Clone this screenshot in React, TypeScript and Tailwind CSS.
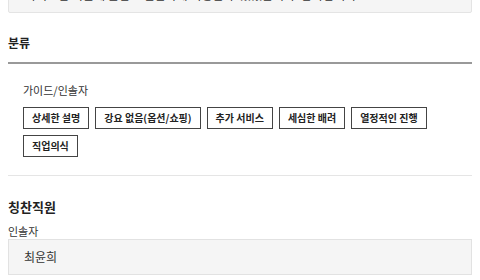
import React from 'react';

const tags = ['상세한 설명', '강요 없음(옵션/쇼핑)', '추가 서비스', '세심한 배려', '열정적인 진행', '직업의식'];

const App = () => {
  return (
    <div
      className="w-[480px] h-[280px] overflow-hidden bg-white px-2 text-[#222]"
      style={{ fontFamily: '"Noto Sans CJK KR", "Noto Sans", sans-serif' }}
    >
      {/* 후기 내용 (위로 잘려 보임) */}
      <div className="-mt-[25px] h-[38px] rounded-[2px] border border-[#e4e4e4] bg-[#f5f5f5] px-[16px] pt-[10px] text-[12px] leading-[18px] text-[#333]">
        가이드님 덕분에 즐겁고 편안하게 여행할 수 있었습니다. 감사합니다.
      </div>

      <div className="mt-[21px] border-b-2 border-[#999] pb-[10px] text-[12px] font-bold leading-[18px] text-[#222]">
        분류
      </div>

      <div className="border-b border-[#e5e5e5] px-[15px] pt-[18px] pb-[18px]">
        <div className="text-[11px] leading-[16px] text-[#333]">가이드/인솔자</div>
        <div className="mt-[9px] flex flex-wrap gap-[6px]">
          {tags.map((tag) => (
            <button
              key={tag}
              type="button"
              className="h-[22px] border border-[#444] bg-white px-[8px] text-[10px] font-bold leading-[20px] text-[#222]"
            >
              {tag}
            </button>
          ))}
        </div>
      </div>

      <div className="mt-[21px] text-[13px] font-bold leading-[20px] text-[#222]">칭찬직원</div>
      <div className="mt-[7px] text-[11px] leading-[15px] text-[#333]">인솔자</div>
      <div className="h-[36px] border border-[#e2e2e2] bg-[#f5f5f5] px-[15px] text-[12px] leading-[34px] text-[#333]">
        최윤희
      </div>
    </div>
  );
};

export default App;
